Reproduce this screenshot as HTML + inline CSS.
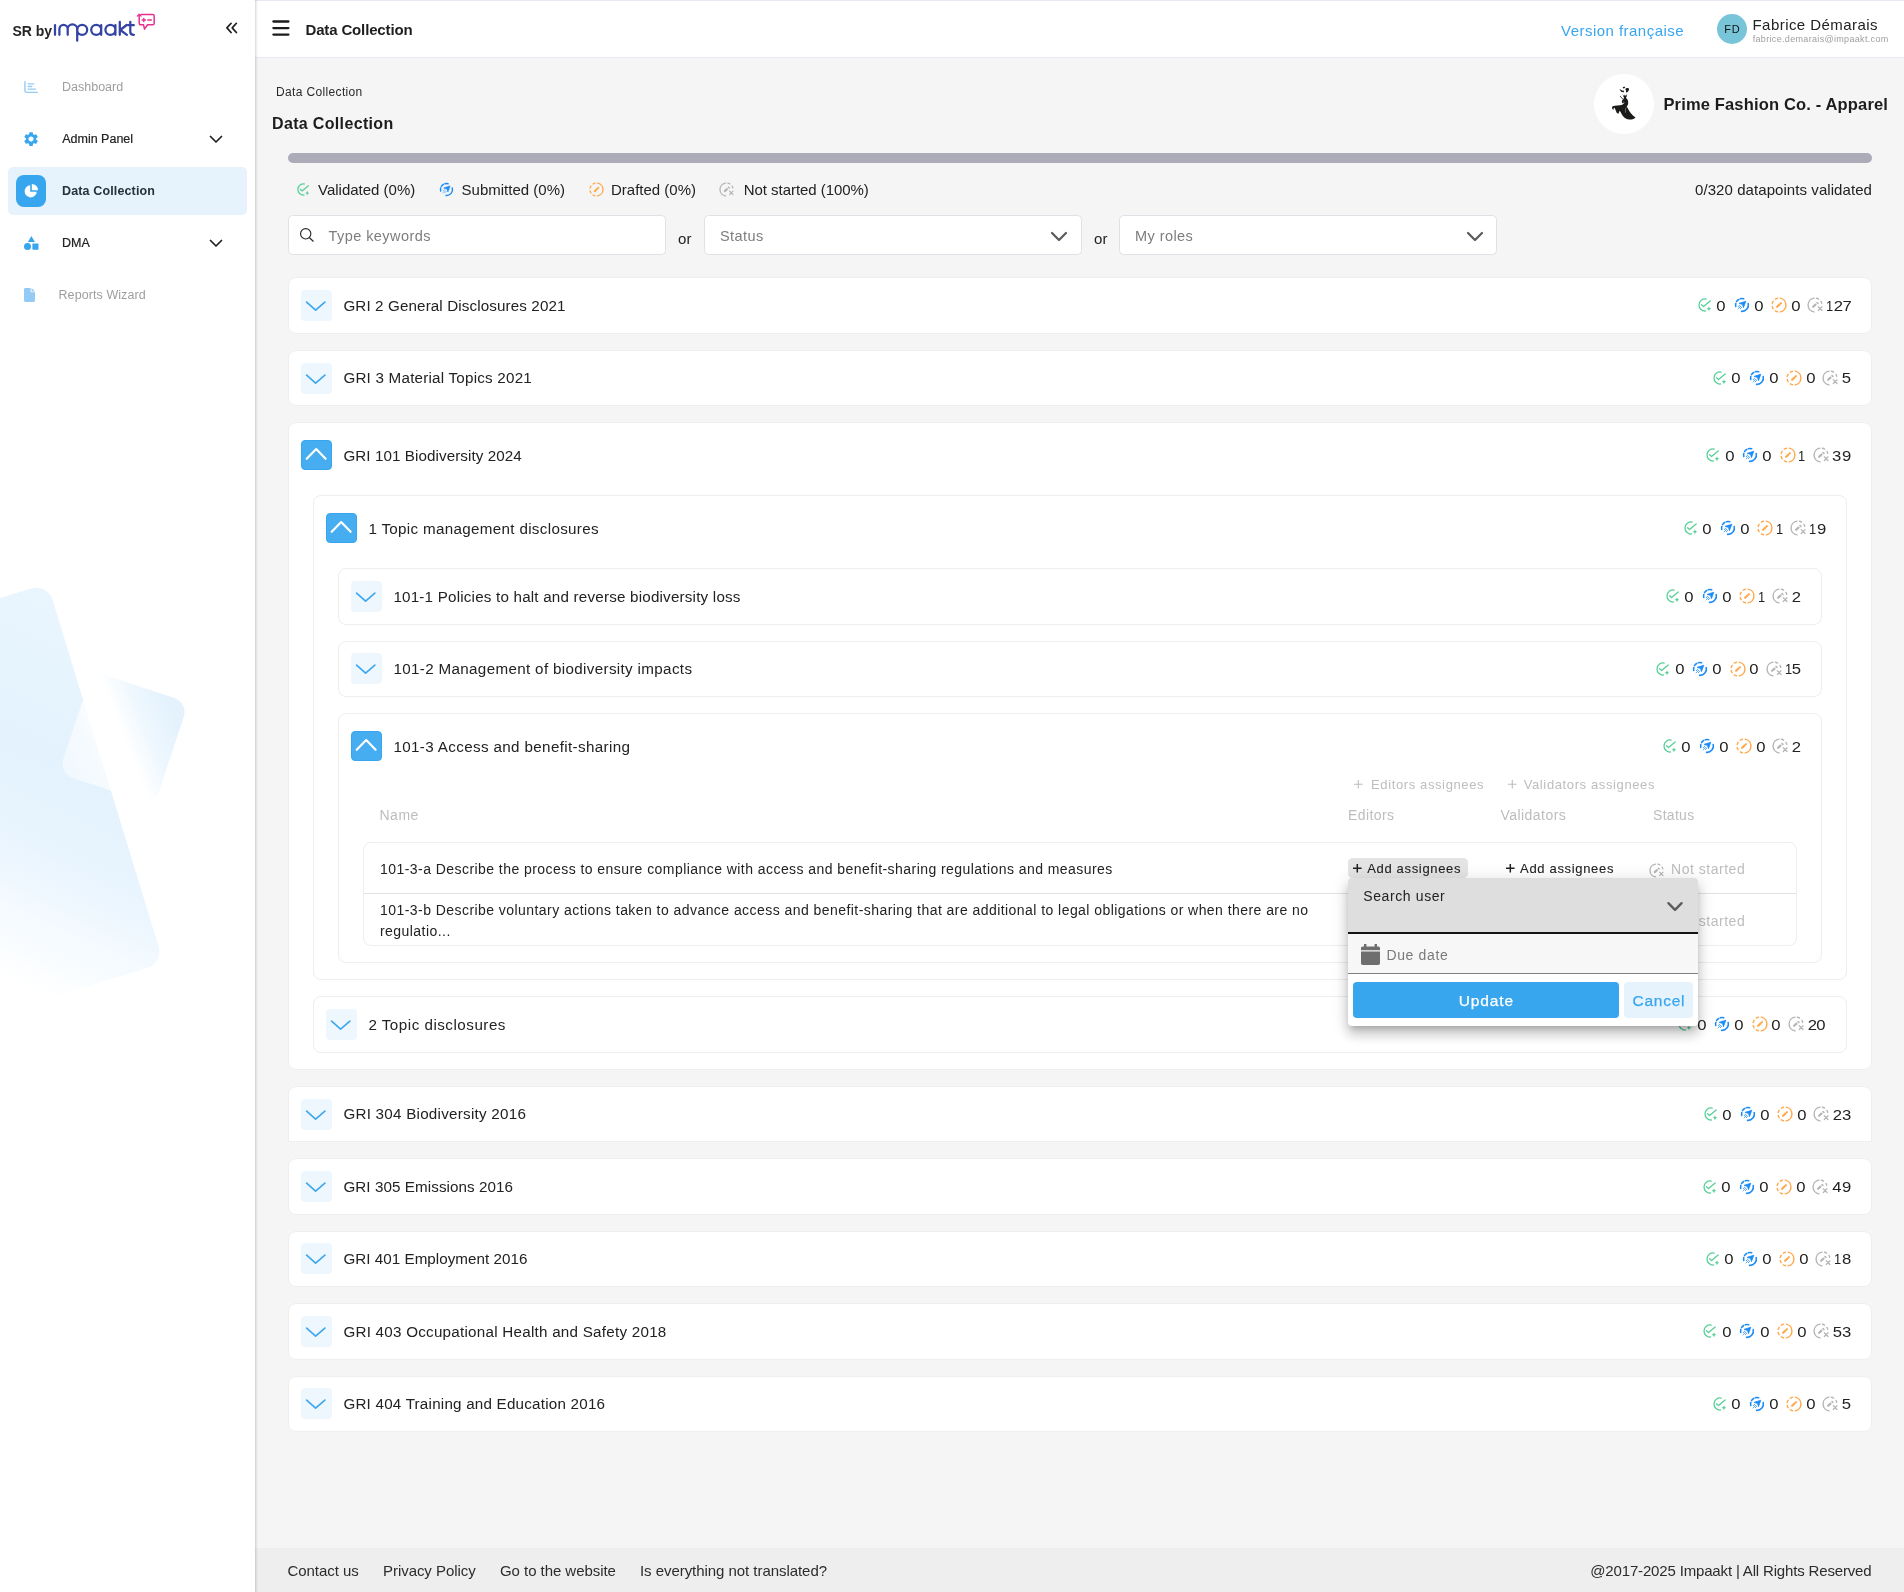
<!DOCTYPE html>
<html lang="en">
<head>
<meta charset="utf-8">
<title>Data Collection</title>
<style>
*{box-sizing:border-box;margin:0;padding:0}
html,body{width:1904px;height:1592px;overflow:hidden;background:#f5f5f5;font-family:"Liberation Sans",sans-serif;color:#222}
body{position:relative}
.abs{position:absolute}
#sidebar,#topbar,#content,#footer,#popup{will-change:transform}
svg{display:block;overflow:visible}
/* ---------- sidebar ---------- */
#sidebar{position:absolute;left:0;top:0;width:255px;height:1592px;background:#fff;overflow:hidden}
#sbedge{position:absolute;left:255px;top:0;width:3px;height:1592px;background:linear-gradient(90deg,rgba(0,0,0,.135) 0,rgba(0,0,0,.10) 33%,rgba(0,0,0,.035) 67%,rgba(0,0,0,0) 100%);z-index:5}
.nav{position:absolute;left:8px;width:239px;height:48px;border-radius:5px}
.nav .ic{position:absolute}
.nav .tx{position:absolute;left:54px;top:0;height:48px;line-height:48px;font-size:12.500px;white-space:nowrap}
.nav.active{background:#e6f3fd}
.nav .chev{position:absolute;left:201px;top:20px}
/* ---------- topbar ---------- */
#topbar{position:absolute;left:255px;top:0;width:1649px;height:58px;background:#fff;border-top:1px solid #e9e9f3;border-bottom:1px solid #e9e9f2}
/* ---------- content ---------- */
.t15{font-size:15px;white-space:nowrap;letter-spacing:0}
.card{position:absolute;background:#fff;border:1px solid #eeeeee;border-radius:8px}
.tog{position:absolute;width:31px;height:31px;border-radius:4px;background:#eef6fe}
.tog.on{height:30.500px;background:#45adf0;border:1px solid #38a6ee}
.tog svg{position:absolute;left:0;top:0}
.ttl{position:absolute;font-size:15.200px;line-height:20px;white-space:nowrap;letter-spacing:.18px;color:#222}
.stats{position:absolute;display:flex;align-items:center;height:20px;font-size:15px;line-height:20px;white-space:nowrap;color:#222}
.stats svg{margin-right:4px;flex:none}
.stats span{margin-right:8px;letter-spacing:.2px}
.stats span:last-child{margin-right:0}
.num{position:absolute;font-size:15px;line-height:20px;white-space:nowrap;color:#222}
.num i{display:inline-block;font-style:normal;text-align:center;transform:scaleX(1.11)}
.r14{font-size:14px;line-height:21px;white-space:nowrap;color:#222;letter-spacing:.445px}
.inp{position:absolute;top:215px;height:40px;background:#fff;border:1px solid #e0e0e7;border-radius:4.500px}
.inp .ph{position:absolute;top:0;line-height:41.200px;font-size:14.500px;color:#7d7d7d;letter-spacing:.44px;white-space:nowrap}
#footer{position:absolute;left:255px;top:1548px;width:1649px;height:44px;background:#eeeeee}
#footer span{position:absolute;top:0;line-height:45px;font-size:15px;white-space:nowrap;letter-spacing:-.05px;color:#2c2c2c}
</style>
</head>
<body>
<svg width="0" height="0" style="position:absolute">
<defs>
<symbol id="i-val" viewBox="0 0 16 16">
 <path d="M9.14 2.11A6.0 6.0 0 1 0 8.52 13.98" fill="none" stroke="#55cf96" stroke-width="1.25" stroke-linecap="round"/>
 <path d="M4.600 7.750l1.950 1.850L13.200 3.950" fill="none" stroke="#55cf96" stroke-width="1.250" stroke-linecap="round" stroke-linejoin="round"/>
 <path d="M11.950 9.300l.700 1.800 1.600.700-1.600.700-.700 1.800-.700-1.800-1.600-.700 1.600-.700z" fill="#55cf96"/>
</symbol>
<symbol id="i-sub" viewBox="0 0 16 16">
 <g fill="none" stroke="#1a8bf7" stroke-width="1.550" stroke-linecap="round">
 <path d="M14.21 6.45A6.4 6.4 0 0 1 7.55 14.38"/>
 <path d="M6.34 1.82A6.4 6.4 0 0 1 9.66 1.82"/>
 <path d="M2.51 4.70A6.4 6.4 0 0 1 4.70 2.51"/>
 <path d="M1.79 9.55A6.4 6.4 0 0 1 1.79 6.45"/>
 </g>
 <path d="M11.850 4.200L5.050 6.300l3.430 1.270 1 3.130z" fill="#1a8bf7" stroke="#1a8bf7" stroke-width=".7" stroke-linejoin="round"/>
 <g fill="#1a8bf7"><circle cx="4.46" cy="9.33" r=".52"/><circle cx="5.46" cy="8.32" r=".52"/><circle cx="6.47" cy="9.33" r=".52"/><circle cx="5.46" cy="10.33" r=".52"/><circle cx="7.47" cy="10.33" r=".52"/><circle cx="6.47" cy="11.4" r=".52"/><circle cx="4.46" cy="11.34" r=".52"/><circle cx="3.450" cy="12.470" r=".45" opacity=".35"/></g>
</symbol>
<symbol id="i-dra" viewBox="0 0 16 16">
 <g fill="none" stroke="#ffa94d" stroke-width="1.450" stroke-linecap="round">
 <path d="M9.21 1.16A6.95 6.95 0 0 1 9.21 14.84"/><path d="M4.32 2.11A6.95 6.95 0 0 1 6.44 1.23"/><path d="M1.23 6.44A6.95 6.95 0 0 1 2.11 4.32"/><path d="M2.11 11.68A6.95 6.95 0 0 1 1.23 9.56"/><path d="M6.44 14.77A6.95 6.95 0 0 1 4.32 13.89"/>
 </g>
 <path d="M6.150 9.750L8.500 7.500" fill="none" stroke="#ffa94d" stroke-width="2.250" stroke-linecap="round"/>
 <path d="M9.750 6.350L9.950 6.150" fill="none" stroke="#ffa94d" stroke-width="2.100" stroke-linecap="round"/>
</symbol>
<symbol id="i-not" viewBox="0 0 16 16">
 <g fill="none" stroke="#b6b6b6" stroke-width="1.400" stroke-linecap="round">
 <path d="M7.03 1.12A6.95 6.95 0 0 0 7.03 14.88"/>
 <path d="M9.44 1.20A6.95 6.95 0 0 1 11.58 2.04"/>
 <path d="M13.96 4.42A6.95 6.95 0 0 1 14.71 6.20"/>
 <path d="M11.300 9.800l3.700 3.700M15 9.800l-3.700 3.700" stroke-width="1.250"/>
 </g>
 <path d="M6.150 9.750L8.450 7.600" fill="none" stroke="#b6b6b6" stroke-width="2.250" stroke-linecap="round"/>
 <path d="M10 5.500l.900.900" fill="none" stroke="#b6b6b6" stroke-width="1.600" stroke-linecap="round"/>
</symbol>
<symbol id="chev-d" viewBox="0 0 31 30.5">
 <path d="M5.600 12.100L14.600 20.200 23.900 12.100" fill="none" stroke="#3aa7ee" stroke-width="1.600" stroke-linecap="round" stroke-linejoin="round"/>
</symbol>
<symbol id="chev-u" viewBox="0 0 31 30.5">
 <path d="M5.700 18.800l9.500-9.700 9.400 9.700" fill="none" stroke="#fff" stroke-width="2.200" stroke-linecap="round" stroke-linejoin="round"/>
</symbol>
</defs>
</svg>

<!-- SIDEBAR -->
<div id="sidebar">
 <!-- decorative shapes -->
 <div class="abs" style="left:-89.800px;top:603.850px;width:200px;height:397.300px;border-radius:17px;transform:rotate(-17deg);background:linear-gradient(222deg,#eaf6fe 0%,#e3f2fd 36%,#e8f4fe 56%,#f4faff 72%,#ffffff 88%)"></div>
 <div class="abs" style="left:73.400px;top:684.300px;width:100.600px;height:108px;border-radius:15px;transform:rotate(18.400deg);background:linear-gradient(50deg,rgba(255,255,255,.5) 0%,rgba(255,255,255,.62) 26%,#fff 43%,#fff 50%,#eef7fe 68%,#e3f2fd 88%,#e3f2fd 100%)"></div>
 <!-- logo -->
 <div class="abs" style="left:12.5px;top:20.5px;font-size:14px;font-weight:bold;line-height:20px;letter-spacing:-.05px;color:#252525;white-space:nowrap">SR by</div>
 <svg class="abs" style="left:53px;top:12px" width="104" height="32" viewBox="0 0 104 32">
  <g fill="none" stroke="#3444a4" stroke-width="2.250" stroke-linecap="round" stroke-linejoin="round">
   <path d="M2 13v9.800"/>
   <path d="M6.400 22.800v-5.700a4.150 4.150 0 0 1 8.300 0v5.700M14.700 17.100a4.750 4.750 0 0 1 9.500 0"/>
   <path d="M24.200 17.100v11.600M24.200 17.850a5 5 0 1 0 10 0a5 5 0 1 0 -10 0"/>
   <path d="M48.200 13v9.800M38.200 17.850a5 5 0 1 0 10 0a5 5 0 1 0 -10 0"/>
   <path d="M62.400 13v9.800M52.400 17.850a5 5 0 1 0 10 0a5 5 0 1 0 -10 0"/>
   <path d="M66.800 9.900v12.900M73.600 13l-6.300 5 6.600 4.800"/>
   <path d="M77.300 9.900v10c0 2 .9 2.900 3.600 2.900M75 13.200h5.800"/>
  </g>
  <g fill="none" stroke="#e8308c" stroke-width="1.500" stroke-linecap="round" stroke-linejoin="round">
   <path d="M88 2.600h11.700a1.500 1.500 0 0 1 1.500 1.500v7.200a1.500 1.500 0 0 1 -1.500 1.500h-5.200l-3 4.300-.9-4.300h-2.900a1.500 1.500 0 0 1 -1.500 -1.500v-7.700"/>
   <path d="M84.300 4.100l1.900-1.900 1.900 1.900" stroke-width="1.300"/>
   <path d="M89.200 8h3.200M90.800 6.400v3.200M94.800 8h3.600" stroke-width="1.400"/>
  </g>
 </svg>
 <svg class="abs" style="left:225px;top:22px" width="13" height="12" viewBox="0 0 13 12"><path d="M6.100 1.300L1.900 5.900 6.100 10.500M11.400 1.300L7.200 5.900l4.200 4.600" fill="none" stroke="#1e1e1e" stroke-width="1.700" stroke-linecap="round" stroke-linejoin="round"/></svg>

 <!-- nav -->
 <div class="nav" style="top:63px">
  <svg class="ic" style="left:15.700px;top:17.600px" width="14.200" height="12.300" viewBox="0 0 15 13"><path d="M1 .8v9.400a1.800 1.800 0 0 0 1.800 1.800H14.200" fill="none" stroke="#93cbf6" stroke-width="1.500" stroke-linecap="round"/><path d="M4.400 3h5.800M4.400 5.800h3.800M4.400 8.600h7.600" fill="none" stroke="#93cbf6" stroke-width="1.500" stroke-linecap="round"/></svg>
  <span class="tx" style="color:#9e9e9e">Dashboard</span>
 </div>
 <div class="nav" style="top:115px">
  <svg class="ic" style="left:15.700px;top:17.200px" width="14.100" height="14.100" viewBox="0 0 24 24"><path fill="#38a6ee" d="M19.140 12.940c.040-.3.060-.61.060-.94 0-.32-.020-.64-.070-.94l2.030-1.580a.49.49 0 0 0 .12-.61l-1.920-3.320a.488.488 0 0 0-.59-.22l-2.390.96c-.5-.38-1.030-.7-1.620-.94l-.36-2.540a.484.484 0 0 0-.48-.41h-3.840c-.24 0-.43.170-.47.410l-.36 2.540c-.59.240-1.130.570-1.620.94l-2.390-.96c-.22-.08-.47 0-.59.220L2.740 8.870c-.12.210-.08.470.12.610l2.030 1.580c-.05.300-.09.630-.09.940s.02.640.07.940l-2.030 1.580a.49.49 0 0 0-.12.610l1.920 3.320c.12.220.37.290.59.220l2.390-.96c.5.380 1.030.7 1.620.94l.36 2.540c.05.240.24.410.48.410h3.840c.24 0 .44-.17.470-.41l.36-2.540c.59-.24 1.130-.56 1.620-.94l2.390.96c.22.080.47 0 .59-.22l1.920-3.320c.12-.22.070-.47-.12-.61l-2.010-1.580zM12 15.600c-1.980 0-3.600-1.620-3.600-3.600s1.620-3.600 3.600-3.600 3.600 1.620 3.600 3.600-1.620 3.600-3.600 3.600z" transform="translate(12 12) scale(1.22) translate(-12 -12)"/></svg>
  <span class="tx" style="color:#222;left:54.200px;-webkit-text-stroke:.2px #222">Admin Panel</span>
  <svg class="chev" width="14" height="9" viewBox="0 0 14 9"><path d="M1.500 1.500L7 7l5.500-5.500" fill="none" stroke="#222" stroke-width="1.700" stroke-linecap="round" stroke-linejoin="round"/></svg>
 </div>
 <div class="nav active" style="top:167px">
  <div class="abs" style="left:8px;top:8px;width:30px;height:32px;border-radius:8px;background:#38a6ee"></div>
  <svg class="ic" style="left:16px;top:17px" width="14" height="14" viewBox="0 0 14 14"><path d="M6.200 1.200A6.100 6.100 0 1 0 12.800 7.800H6.200z" fill="#fff"/><path d="M7.800 0A6.200 6.200 0 0 1 14 6.200H7.800z" fill="#fff"/></svg>
  <span class="tx" style="color:#263238;font-weight:bold;letter-spacing:.14px">Data Collection</span>
 </div>
 <div class="nav" style="top:219px">
  <svg class="ic" style="left:15.500px;top:17px" width="14.500" height="14" viewBox="0 0 14.500 14"><path d="M7.400 0l3.500 6H3.900z" fill="#38a6ee"/><circle cx="3.500" cy="10.500" r="3.500" fill="#38a6ee"/><rect x="8.400" y="7.600" width="6.100" height="6.100" rx=".6" fill="#38a6ee"/></svg>
  <span class="tx" style="color:#222;-webkit-text-stroke:.2px #222">DMA</span>
  <svg class="chev" width="14" height="9" viewBox="0 0 14 9"><path d="M1.500 1.500L7 7l5.500-5.500" fill="none" stroke="#222" stroke-width="1.700" stroke-linecap="round" stroke-linejoin="round"/></svg>
 </div>
 <div class="nav" style="top:271px">
  <svg class="ic" style="left:15.700px;top:17px" width="11" height="14" viewBox="0 0 11 14"><path d="M1.400 0h5.200v3.300a1 1 0 0 0 1 1H11v8.300A1.400 1.400 0 0 1 9.600 14H1.400A1.400 1.400 0 0 1 0 12.600V1.400A1.400 1.400 0 0 1 1.400 0z" fill="#93cbf6"/><path d="M7.500 0L11 3.500H7.900a.4.400 0 0 1 -.4-.4z" fill="#93cbf6"/></svg>
  <span class="tx" style="left:50.500px;color:#9e9e9e;letter-spacing:.08px">Reports Wizard</span>
 </div>
</div>

<div id="sbedge"></div>
<!-- TOPBAR -->
<div id="topbar">
 <svg class="abs" style="left:17px;top:19px" width="18" height="16" viewBox="0 0 18 16"><path d="M1.400 1.500h15M1.400 8.050h15M1.400 14.600h15" fill="none" stroke="#1c1c1c" stroke-width="2.300" stroke-linecap="round"/></svg>
 <div class="abs" style="left:50.500px;top:19px;font-size:15px;font-weight:bold;line-height:20px;white-space:nowrap;color:#1e1e1e;letter-spacing:-.15px">Data Collection</div>
 <div class="abs" style="left:1306px;top:20px;font-size:15px;line-height:20px;white-space:nowrap;color:#38a6ee;letter-spacing:.47px">Version fran&ccedil;aise</div>
 <div class="abs" style="left:1462px;top:13px;width:30px;height:30px;border-radius:50%;background:#78c5d9;text-align:center;line-height:31.200px;font-size:11px;color:#111;letter-spacing:.9px;text-indent:.9px">FD</div>
 <div class="abs" style="left:1497.500px;top:13.550px;font-size:15px;line-height:20px;white-space:nowrap;color:#222;letter-spacing:.45px">Fabrice D&eacute;marais</div>
 <div class="abs" style="left:1497.700px;top:32.280px;font-size:9px;line-height:12px;white-space:nowrap;color:#9e9e9e;letter-spacing:.33px">fabrice.demarais@impaakt.com</div>
</div>

<!-- CONTENT -->
<div id="content" class="abs" style="left:0;top:0;width:1904px;height:1592px">
<div class="abs" style="left:276px;top:81.850px;font-size:12px;line-height:20px;white-space:nowrap;color:#2a2a2a;letter-spacing:.35px">Data Collection</div>
<div class="abs" style="left:272px;top:113.200px;font-size:16px;font-weight:bold;line-height:22px;white-space:nowrap;color:#1c1c1c;letter-spacing:.34px">Data Collection</div>
<div class="abs" style="left:1594px;top:74px;width:60px;height:60px;border-radius:50%;background:#fff"></div>
<svg class="abs" style="left:1600px;top:80px" width="48" height="48" viewBox="0 0 1592 1592"><g fill="#1b1b19">
<path d="M646 312Q694 412 794 408L792 352Q730 362 690 312Z"/>
<path d="M838 300Q868 246 942 268Q985 300 944 362Q902 414 858 412Q884 352 838 300Z"/>
<path d="M754 236L834 220 826 266 770 278Z"/>
<path d="M740 462L796 534 824 480 852 534 900 462 884 546 860 592C902 630 942 682 936 762C930 832 892 862 882 922L906 904C960 1040 1060 1160 1178 1246C1150 1292 1050 1322 960 1312C860 1292 780 1232 730 1150C700 1100 682 1052 650 1020L612 1122 558 1092 482 922C452 932 442 962 452 992C400 972 378 900 420 868C500 838 640 850 740 820C780 800 800 772 812 742C782 772 752 782 740 770C708 720 728 680 760 650L800 600Z"/>
</g><path d="M664 532L764 642" stroke="#1b1b19" stroke-width="26" fill="none"/><path d="M852 930L842 1085" stroke="#fff" stroke-width="14" fill="none" opacity=".8"/><path d="M770 700Q800 740 790 790" stroke="#fff" stroke-width="12" fill="none" opacity=".7"/></svg>
<div class="abs" style="left:1663.400px;top:94px;font-size:16.500px;font-weight:bold;line-height:20px;white-space:nowrap;color:#1c1c1c;letter-spacing:.16px">Prime Fashion Co. - Apparel</div>
<div class="abs" style="left:288px;top:153px;width:1584px;height:9.500px;border-radius:5px;background:#acacb9"></div>
<svg class="abs" style="left:296.2px;top:181.600px" width="15" height="15"><use href="#i-val"/></svg><div class="abs t15" style="left:318px;top:180px;line-height:20px">Validated (0%)</div>
<svg class="abs" style="left:439.0px;top:181.600px" width="15" height="15"><use href="#i-sub"/></svg><div class="abs t15" style="left:461.6px;top:180px;line-height:20px">Submitted (0%)</div>
<svg class="abs" style="left:588.5px;top:181.600px" width="15" height="15"><use href="#i-dra"/></svg><div class="abs t15" style="left:611px;top:180px;line-height:20px">Drafted (0%)</div>
<svg class="abs" style="left:719.1px;top:181.600px" width="15" height="15"><use href="#i-not"/></svg><div class="abs t15" style="left:743.8px;top:180px;line-height:20px"><span style="letter-spacing:-.05px">Not started (100%)</span></div>
<div class="abs t15" style="right:32px;top:180px;line-height:20px;letter-spacing:.07px">0/320 datapoints validated</div>
<div class="inp" style="left:288px;width:378px"><svg class="abs" style="left:10.900px;top:11.900px" width="16" height="16" viewBox="0 0 16 16"><circle cx="5.700" cy="5.800" r="5.150" fill="none" stroke="#2b2b2b" stroke-width="1.150"/><path d="M9.500 9.700l3.700 3.500" stroke="#2b2b2b" stroke-width="1.200" stroke-linecap="round"/></svg><span class="ph" style="left:39.500px">Type keywords</span></div>
<div class="abs t15" style="left:678px;top:228.600px;line-height:20px;letter-spacing:.2px">or</div>
<div class="inp" style="left:704px;width:378px"><span class="ph" style="left:15px">Status</span><svg class="abs" style="left:345px;top:15px" width="18" height="11" viewBox="0 0 18 11"><path d="M2 2l7 7 7-7" fill="none" stroke="#5a5a5a" stroke-width="2.200" stroke-linecap="round" stroke-linejoin="round"/></svg></div>
<div class="abs t15" style="left:1094px;top:228.600px;line-height:20px;letter-spacing:.2px">or</div>
<div class="inp" style="left:1119px;width:378px"><span class="ph" style="left:15px">My roles</span><svg class="abs" style="left:346px;top:15px" width="18" height="11" viewBox="0 0 18 11"><path d="M2 2l7 7 7-7" fill="none" stroke="#5a5a5a" stroke-width="2.200" stroke-linecap="round" stroke-linejoin="round"/></svg></div>
<div class="card" style="left:288px;top:277px;width:1584px;height:57px;"></div>
<div class="tog" style="left:301px;top:289.95px"><svg width="31" height="30.5" style="left:0px;top:0px"><use href="#chev-d"/></svg></div>
<div class="ttl" style="left:343.4px;top:295.50px;letter-spacing:0.12px">GRI 2 General Disclosures 2021</div>
<svg class="abs" style="left:1696.95px;top:297.45px" width="16" height="16"><use href="#i-val"/></svg>
<div class="num" style="left:1716.45px;top:295.85px"><i style="width:9.6px">0</i></div>
<svg class="abs" style="left:1733.95px;top:297.45px" width="16" height="16"><use href="#i-sub"/></svg>
<div class="num" style="left:1754.05px;top:295.85px"><i style="width:9.6px">0</i></div>
<svg class="abs" style="left:1771.45px;top:297.45px" width="16" height="16"><use href="#i-dra"/></svg>
<div class="num" style="left:1791.10px;top:295.85px"><i style="width:9.6px">0</i></div>
<svg class="abs" style="left:1807.45px;top:297.45px" width="16" height="16"><use href="#i-not"/></svg>
<div class="num" style="left:1827.30px;top:295.85px"><i style="width:6.5px;transform:translateX(-1.500px) scaleX(.86)">1</i><i style="width:8.85px">2</i><i style="width:8.35px">7</i></div>
<div class="card" style="left:288px;top:350px;width:1584px;height:56px;"></div>
<div class="tog" style="left:301px;top:362.50px"><svg width="31" height="30.5" style="left:0px;top:0px"><use href="#chev-d"/></svg></div>
<div class="ttl" style="left:343.4px;top:368.05px;letter-spacing:0.22px">GRI 3 Material Topics 2021</div>
<svg class="abs" style="left:1711.70px;top:370.00px" width="16" height="16"><use href="#i-val"/></svg>
<div class="num" style="left:1731.20px;top:368.40px"><i style="width:9.6px">0</i></div>
<svg class="abs" style="left:1748.70px;top:370.00px" width="16" height="16"><use href="#i-sub"/></svg>
<div class="num" style="left:1768.80px;top:368.40px"><i style="width:9.6px">0</i></div>
<svg class="abs" style="left:1786.20px;top:370.00px" width="16" height="16"><use href="#i-dra"/></svg>
<div class="num" style="left:1805.85px;top:368.40px"><i style="width:9.6px">0</i></div>
<svg class="abs" style="left:1822.20px;top:370.00px" width="16" height="16"><use href="#i-not"/></svg>
<div class="num" style="left:1842.00px;top:368.40px"><i style="width:9.0px">5</i></div>
<div class="card" style="left:288px;top:422px;width:1584px;height:648px;"></div>
<div class="tog on" style="left:301px;top:439.75px"><svg width="31" height="30.5" style="left:-1px;top:-1px"><use href="#chev-u"/></svg></div>
<div class="ttl" style="left:343.4px;top:445.60px;letter-spacing:0.08px">GRI 101 Biodiversity 2024</div>
<svg class="abs" style="left:1705.25px;top:447.00px" width="16" height="16"><use href="#i-val"/></svg>
<div class="num" style="left:1724.75px;top:446.00px"><i style="width:9.6px">0</i></div>
<svg class="abs" style="left:1742.25px;top:447.00px" width="16" height="16"><use href="#i-sub"/></svg>
<div class="num" style="left:1762.35px;top:446.00px"><i style="width:9.6px">0</i></div>
<svg class="abs" style="left:1779.75px;top:447.00px" width="16" height="16"><use href="#i-dra"/></svg>
<div class="num" style="left:1799.45px;top:446.00px"><i style="width:6.5px;transform:translateX(-1.500px) scaleX(.86)">1</i></div>
<svg class="abs" style="left:1812.65px;top:447.00px" width="16" height="16"><use href="#i-not"/></svg>
<div class="num" style="left:1832.45px;top:446.00px"><i style="width:9.25px">3</i><i style="width:9.3px">9</i></div>
<div class="card" style="left:313px;top:495px;width:1534px;height:485px;"></div>
<div class="tog on" style="left:326px;top:512.75px"><svg width="31" height="30.5" style="left:-1px;top:-1px"><use href="#chev-u"/></svg></div>
<div class="ttl" style="left:368.4px;top:518.60px;letter-spacing:0.32px">1 Topic management disclosures</div>
<svg class="abs" style="left:1682.95px;top:520.00px" width="16" height="16"><use href="#i-val"/></svg>
<div class="num" style="left:1702.45px;top:519.00px"><i style="width:9.6px">0</i></div>
<svg class="abs" style="left:1719.95px;top:520.00px" width="16" height="16"><use href="#i-sub"/></svg>
<div class="num" style="left:1740.05px;top:519.00px"><i style="width:9.6px">0</i></div>
<svg class="abs" style="left:1757.45px;top:520.00px" width="16" height="16"><use href="#i-dra"/></svg>
<div class="num" style="left:1777.15px;top:519.00px"><i style="width:6.5px;transform:translateX(-1.500px) scaleX(.86)">1</i></div>
<svg class="abs" style="left:1790.35px;top:520.00px" width="16" height="16"><use href="#i-not"/></svg>
<div class="num" style="left:1810.20px;top:519.00px"><i style="width:6.5px;transform:translateX(-1.500px) scaleX(.86)">1</i><i style="width:9.3px">9</i></div>
<div class="card" style="left:338px;top:568px;width:1484px;height:57px;"></div>
<div class="tog" style="left:351px;top:580.90px"><svg width="31" height="30.5" style="left:0px;top:0px"><use href="#chev-d"/></svg></div>
<div class="ttl" style="left:393.4px;top:587.15px;letter-spacing:0.20px">101-1 Policies to halt and reverse biodiversity loss</div>
<svg class="abs" style="left:1664.95px;top:588.40px" width="16" height="16"><use href="#i-val"/></svg>
<div class="num" style="left:1684.45px;top:586.80px"><i style="width:9.6px">0</i></div>
<svg class="abs" style="left:1701.95px;top:588.40px" width="16" height="16"><use href="#i-sub"/></svg>
<div class="num" style="left:1722.05px;top:586.80px"><i style="width:9.6px">0</i></div>
<svg class="abs" style="left:1739.45px;top:588.40px" width="16" height="16"><use href="#i-dra"/></svg>
<div class="num" style="left:1759.15px;top:586.80px"><i style="width:6.5px;transform:translateX(-1.500px) scaleX(.86)">1</i></div>
<svg class="abs" style="left:1772.35px;top:588.40px" width="16" height="16"><use href="#i-not"/></svg>
<div class="num" style="left:1792.15px;top:586.80px"><i style="width:8.85px">2</i></div>
<div class="card" style="left:338px;top:641px;width:1484px;height:56px;"></div>
<div class="tog" style="left:351px;top:653.25px"><svg width="31" height="30.5" style="left:0px;top:0px"><use href="#chev-d"/></svg></div>
<div class="ttl" style="left:393.4px;top:658.80px;letter-spacing:0.34px">101-2 Management of biodiversity impacts</div>
<svg class="abs" style="left:1655.15px;top:660.75px" width="16" height="16"><use href="#i-val"/></svg>
<div class="num" style="left:1674.65px;top:659.15px"><i style="width:9.6px">0</i></div>
<svg class="abs" style="left:1692.15px;top:660.75px" width="16" height="16"><use href="#i-sub"/></svg>
<div class="num" style="left:1712.25px;top:659.15px"><i style="width:9.6px">0</i></div>
<svg class="abs" style="left:1729.65px;top:660.75px" width="16" height="16"><use href="#i-dra"/></svg>
<div class="num" style="left:1749.30px;top:659.15px"><i style="width:9.6px">0</i></div>
<svg class="abs" style="left:1765.65px;top:660.75px" width="16" height="16"><use href="#i-not"/></svg>
<div class="num" style="left:1785.50px;top:659.15px"><i style="width:6.5px;transform:translateX(-1.500px) scaleX(.86)">1</i><i style="width:9.0px">5</i></div>
<div class="card" style="left:338px;top:713px;width:1484px;height:250px;"></div>
<div class="tog on" style="left:351px;top:730.70px"><svg width="31" height="30.5" style="left:-1px;top:-1px"><use href="#chev-u"/></svg></div>
<div class="ttl" style="left:393.4px;top:736.55px;letter-spacing:0.36px">101-3 Access and benefit-sharing</div>
<svg class="abs" style="left:1661.85px;top:737.95px" width="16" height="16"><use href="#i-val"/></svg>
<div class="num" style="left:1681.35px;top:736.95px"><i style="width:9.6px">0</i></div>
<svg class="abs" style="left:1698.85px;top:737.95px" width="16" height="16"><use href="#i-sub"/></svg>
<div class="num" style="left:1718.95px;top:736.95px"><i style="width:9.6px">0</i></div>
<svg class="abs" style="left:1736.35px;top:737.95px" width="16" height="16"><use href="#i-dra"/></svg>
<div class="num" style="left:1756.00px;top:736.95px"><i style="width:9.6px">0</i></div>
<svg class="abs" style="left:1772.35px;top:737.95px" width="16" height="16"><use href="#i-not"/></svg>
<div class="num" style="left:1792.15px;top:736.95px"><i style="width:8.85px">2</i></div>
<svg class="abs" style="left:1354.3px;top:780.1px" width="8.600" height="8.600" viewBox="0 0 8.600 8.600"><path d="M0 4.300h8.600M4.300 0v8.600" stroke="#bdbdbd" stroke-width="1.1" fill="none"/></svg>
<div class="abs" style="left:1371px;top:774.800px;font-size:13px;line-height:20px;white-space:nowrap;color:#bdbdbd;letter-spacing:.62px">Editors assignees</div>
<svg class="abs" style="left:1507.6px;top:780.1px" width="8.600" height="8.600" viewBox="0 0 8.600 8.600"><path d="M0 4.300h8.600M4.300 0v8.600" stroke="#bdbdbd" stroke-width="1.1" fill="none"/></svg>
<div class="abs" style="left:1523.700px;top:774.800px;font-size:13px;line-height:20px;white-space:nowrap;color:#bdbdbd;letter-spacing:.62px">Validators assignees</div>
<div class="abs" style="left:379.5px;top:805.200px;font-size:14px;line-height:20px;white-space:nowrap;color:#bdbdbd;letter-spacing:0.5px">Name</div>
<div class="abs" style="left:1348px;top:805.200px;font-size:14px;line-height:20px;white-space:nowrap;color:#bdbdbd;letter-spacing:0.42px">Editors</div>
<div class="abs" style="left:1500.5px;top:805.200px;font-size:14px;line-height:20px;white-space:nowrap;color:#bdbdbd;letter-spacing:0.45px">Validators</div>
<div class="abs" style="left:1653px;top:805.200px;font-size:14px;line-height:20px;white-space:nowrap;color:#bdbdbd;letter-spacing:0.3px">Status</div>
<div class="card" style="left:363px;top:842px;width:1434px;height:104px;border-radius:8px"></div>
<div class="abs" style="left:364px;top:893px;width:1432px;height:1px;background:#e2e2e2"></div>
<div class="abs r14" style="left:380px;top:858.500px">101-3-a Describe the process to ensure compliance with access and benefit-sharing regulations and measures</div>
<div class="abs r14" style="left:380px;top:899.600px">101-3-b Describe voluntary actions taken to advance access and benefit-sharing that are additional to legal obligations or when there are no<br>regulatio...</div>
<div class="abs" style="left:1348.200px;top:858.200px;width:119.800px;height:20px;border-radius:4.500px;background:#e4e4e4"></div>
<svg class="abs" style="left:1352.6px;top:864.1px" width="8.600" height="8.600" viewBox="0 0 8.600 8.600"><path d="M0 4.300h8.600M4.300 0v8.600" stroke="#222" stroke-width="1.5" fill="none"/></svg>
<div class="abs" style="left:1367.1999999999998px;top:858.800px;font-size:13px;line-height:20px;white-space:nowrap;color:#222;letter-spacing:.67px;-webkit-text-stroke:.1px #222">Add assignees</div>
<svg class="abs" style="left:1505.5px;top:864.1px" width="8.600" height="8.600" viewBox="0 0 8.600 8.600"><path d="M0 4.300h8.600M4.300 0v8.600" stroke="#222" stroke-width="1.5" fill="none"/></svg>
<div class="abs" style="left:1520.1px;top:858.800px;font-size:13px;line-height:20px;white-space:nowrap;color:#222;letter-spacing:.67px;-webkit-text-stroke:.1px #222">Add assignees</div>
<svg class="abs" style="left:1648.900px;top:862.5px" width="15" height="15"><use href="#i-not"/></svg>
<div class="abs" style="left:1671px;top:858.7px;font-size:14px;line-height:20px;white-space:nowrap;color:#bdbdbd;letter-spacing:.52px">Not started</div>
<svg class="abs" style="left:1648.900px;top:914.3px" width="15" height="15"><use href="#i-not"/></svg>
<div class="abs" style="left:1671px;top:910.5px;font-size:14px;line-height:20px;white-space:nowrap;color:#bdbdbd;letter-spacing:.52px">Not started</div>
<div class="card" style="left:313px;top:996px;width:1534px;height:57px;"></div>
<div class="tog" style="left:326px;top:1008.85px"><svg width="31" height="30.5" style="left:0px;top:0px"><use href="#chev-d"/></svg></div>
<div class="ttl" style="left:368.4px;top:1015.10px;letter-spacing:0.50px">2 Topic disclosures</div>
<svg class="abs" style="left:1677.25px;top:1016.35px" width="16" height="16"><use href="#i-val"/></svg>
<div class="num" style="left:1696.75px;top:1014.75px"><i style="width:9.6px">0</i></div>
<svg class="abs" style="left:1714.25px;top:1016.35px" width="16" height="16"><use href="#i-sub"/></svg>
<div class="num" style="left:1734.35px;top:1014.75px"><i style="width:9.6px">0</i></div>
<svg class="abs" style="left:1751.75px;top:1016.35px" width="16" height="16"><use href="#i-dra"/></svg>
<div class="num" style="left:1771.40px;top:1014.75px"><i style="width:9.6px">0</i></div>
<svg class="abs" style="left:1787.75px;top:1016.35px" width="16" height="16"><use href="#i-not"/></svg>
<div class="num" style="left:1807.55px;top:1014.75px"><i style="width:8.85px">2</i><i style="width:9.6px">0</i></div>
<div class="card" style="left:288px;top:1086px;width:1584px;height:56px;border-bottom-left-radius:0;border-bottom-right-radius:0"></div>
<div class="tog" style="left:301px;top:1098.60px"><svg width="31" height="30.5" style="left:0px;top:0px"><use href="#chev-d"/></svg></div>
<div class="ttl" style="left:343.4px;top:1104.15px;letter-spacing:0.25px">GRI 304 Biodiversity 2016</div>
<svg class="abs" style="left:1702.60px;top:1106.10px" width="16" height="16"><use href="#i-val"/></svg>
<div class="num" style="left:1722.10px;top:1104.50px"><i style="width:9.6px">0</i></div>
<svg class="abs" style="left:1739.60px;top:1106.10px" width="16" height="16"><use href="#i-sub"/></svg>
<div class="num" style="left:1759.70px;top:1104.50px"><i style="width:9.6px">0</i></div>
<svg class="abs" style="left:1777.10px;top:1106.10px" width="16" height="16"><use href="#i-dra"/></svg>
<div class="num" style="left:1796.75px;top:1104.50px"><i style="width:9.6px">0</i></div>
<svg class="abs" style="left:1813.10px;top:1106.10px" width="16" height="16"><use href="#i-not"/></svg>
<div class="num" style="left:1832.90px;top:1104.50px"><i style="width:8.85px">2</i><i style="width:9.25px">3</i></div>
<div class="card" style="left:288px;top:1158px;width:1584px;height:57px;"></div>
<div class="tog" style="left:301px;top:1171.00px"><svg width="31" height="30.5" style="left:0px;top:0px"><use href="#chev-d"/></svg></div>
<div class="ttl" style="left:343.4px;top:1176.55px;letter-spacing:0.08px">GRI 305 Emissions 2016</div>
<svg class="abs" style="left:1701.70px;top:1178.50px" width="16" height="16"><use href="#i-val"/></svg>
<div class="num" style="left:1721.20px;top:1176.90px"><i style="width:9.6px">0</i></div>
<svg class="abs" style="left:1738.70px;top:1178.50px" width="16" height="16"><use href="#i-sub"/></svg>
<div class="num" style="left:1758.80px;top:1176.90px"><i style="width:9.6px">0</i></div>
<svg class="abs" style="left:1776.20px;top:1178.50px" width="16" height="16"><use href="#i-dra"/></svg>
<div class="num" style="left:1795.85px;top:1176.90px"><i style="width:9.6px">0</i></div>
<svg class="abs" style="left:1812.20px;top:1178.50px" width="16" height="16"><use href="#i-not"/></svg>
<div class="num" style="left:1832.00px;top:1176.90px"><i style="width:9.7px">4</i><i style="width:9.3px">9</i></div>
<div class="card" style="left:288px;top:1231px;width:1584px;height:56px;"></div>
<div class="tog" style="left:301px;top:1243.40px"><svg width="31" height="30.5" style="left:0px;top:0px"><use href="#chev-d"/></svg></div>
<div class="ttl" style="left:343.4px;top:1248.95px;letter-spacing:0.04px">GRI 401 Employment 2016</div>
<svg class="abs" style="left:1704.90px;top:1250.90px" width="16" height="16"><use href="#i-val"/></svg>
<div class="num" style="left:1724.40px;top:1249.30px"><i style="width:9.6px">0</i></div>
<svg class="abs" style="left:1741.90px;top:1250.90px" width="16" height="16"><use href="#i-sub"/></svg>
<div class="num" style="left:1762.00px;top:1249.30px"><i style="width:9.6px">0</i></div>
<svg class="abs" style="left:1779.40px;top:1250.90px" width="16" height="16"><use href="#i-dra"/></svg>
<div class="num" style="left:1799.05px;top:1249.30px"><i style="width:9.6px">0</i></div>
<svg class="abs" style="left:1815.40px;top:1250.90px" width="16" height="16"><use href="#i-not"/></svg>
<div class="num" style="left:1835.25px;top:1249.30px"><i style="width:6.5px;transform:translateX(-1.500px) scaleX(.86)">1</i><i style="width:9.25px">8</i></div>
<div class="card" style="left:288px;top:1303px;width:1584px;height:57px;"></div>
<div class="tog" style="left:301px;top:1315.80px"><svg width="31" height="30.5" style="left:0px;top:0px"><use href="#chev-d"/></svg></div>
<div class="ttl" style="left:343.4px;top:1322.05px;letter-spacing:0.25px">GRI 403 Occupational Health and Safety 2018</div>
<svg class="abs" style="left:1702.45px;top:1323.30px" width="16" height="16"><use href="#i-val"/></svg>
<div class="num" style="left:1721.95px;top:1321.70px"><i style="width:9.6px">0</i></div>
<svg class="abs" style="left:1739.45px;top:1323.30px" width="16" height="16"><use href="#i-sub"/></svg>
<div class="num" style="left:1759.55px;top:1321.70px"><i style="width:9.6px">0</i></div>
<svg class="abs" style="left:1776.95px;top:1323.30px" width="16" height="16"><use href="#i-dra"/></svg>
<div class="num" style="left:1796.60px;top:1321.70px"><i style="width:9.6px">0</i></div>
<svg class="abs" style="left:1812.95px;top:1323.30px" width="16" height="16"><use href="#i-not"/></svg>
<div class="num" style="left:1832.75px;top:1321.70px"><i style="width:9.0px">5</i><i style="width:9.25px">3</i></div>
<div class="card" style="left:288px;top:1376px;width:1584px;height:56px;"></div>
<div class="tog" style="left:301px;top:1388.30px"><svg width="31" height="30.5" style="left:0px;top:0px"><use href="#chev-d"/></svg></div>
<div class="ttl" style="left:343.4px;top:1393.85px;letter-spacing:0.22px">GRI 404 Training and Education 2016</div>
<svg class="abs" style="left:1711.70px;top:1395.80px" width="16" height="16"><use href="#i-val"/></svg>
<div class="num" style="left:1731.20px;top:1394.20px"><i style="width:9.6px">0</i></div>
<svg class="abs" style="left:1748.70px;top:1395.80px" width="16" height="16"><use href="#i-sub"/></svg>
<div class="num" style="left:1768.80px;top:1394.20px"><i style="width:9.6px">0</i></div>
<svg class="abs" style="left:1786.20px;top:1395.80px" width="16" height="16"><use href="#i-dra"/></svg>
<div class="num" style="left:1805.85px;top:1394.20px"><i style="width:9.6px">0</i></div>
<svg class="abs" style="left:1822.20px;top:1395.80px" width="16" height="16"><use href="#i-not"/></svg>
<div class="num" style="left:1842.00px;top:1394.20px"><i style="width:9.0px">5</i></div>
</div>
<div id="popup" class="abs" style="left:1348px;top:878.200px;width:350px;height:147.800px;background:#fff;border-radius:4px;box-shadow:0 5px 6px -3px rgba(0,0,0,.2),0 9px 12px 1px rgba(0,0,0,.14),0 3px 16px 2px rgba(0,0,0,.12)">
 <div class="abs" style="left:0;top:0;width:350px;height:56.200px;background:#dedede;border-radius:4px 4px 0 0;border-bottom:2px solid #151515"></div>
 <div class="abs" style="left:15.300px;top:8.300px;font-size:14px;line-height:20px;white-space:nowrap;color:#222;letter-spacing:.6px">Search user</div>
 <svg class="abs" style="left:318px;top:23.400px" width="18" height="11" viewBox="0 0 18 11"><path d="M2.400 2.200l6.600 6.600 6.600-6.600" fill="none" stroke="#5c5c5c" stroke-width="2.400" stroke-linecap="round" stroke-linejoin="round"/></svg>
 <div class="abs" style="left:0;top:56.200px;width:350px;height:39.600px;background:#f7f7f7;border-bottom:1px solid #808080"></div>
 <svg class="abs" style="left:13px;top:66px" width="19" height="21" viewBox="0 0 19 21"><path d="M4.200 0v3M14.800 0v3" stroke="#6e6e6e" stroke-width="2.400"/><path d="M1.500 2.500h16a1.500 1.500 0 0 1 1.500 1.500v2.200H0V4a1.500 1.500 0 0 1 1.500-1.500z" fill="#6e6e6e"/><path d="M0 7.600h19v11.600a1.800 1.800 0 0 1 -1.800 1.800H1.800A1.800 1.800 0 0 1 0 19.200z" fill="#6e6e6e"/></svg>
 <div class="abs" style="left:38.400px;top:67.400px;font-size:14px;line-height:20px;white-space:nowrap;color:#7a7a7a;letter-spacing:.64px">Due date</div>
 <div class="abs" style="left:5px;top:104.100px;width:265.800px;height:35.500px;border-radius:4px;background:#38a6ee;color:#fff;text-align:center;font-size:15.500px;line-height:38.500px;letter-spacing:.88px;text-indent:.88px;-webkit-text-stroke:.25px #fff">Update</div>
 <div class="abs" style="left:276px;top:104.100px;width:69px;height:35.500px;border-radius:4px;background:#e6f3fd;color:#38a6ee;text-align:center;font-size:15.500px;line-height:38.500px;letter-spacing:.76px;text-indent:.76px;-webkit-text-stroke:.25px #38a6ee">Cancel</div>
</div>

<!-- FOOTER -->
<div id="footer">
 <span style="left:32.5px">Contact us</span>
 <span style="left:128px">Privacy Policy</span>
 <span style="left:245px">Go to the website</span>
 <span style="left:385px">Is everything not translated?</span>
 <span style="right:32.500px;letter-spacing:-.16px">@2017-2025 Impaakt | All Rights Reserved</span>
</div>
</body>
</html>
